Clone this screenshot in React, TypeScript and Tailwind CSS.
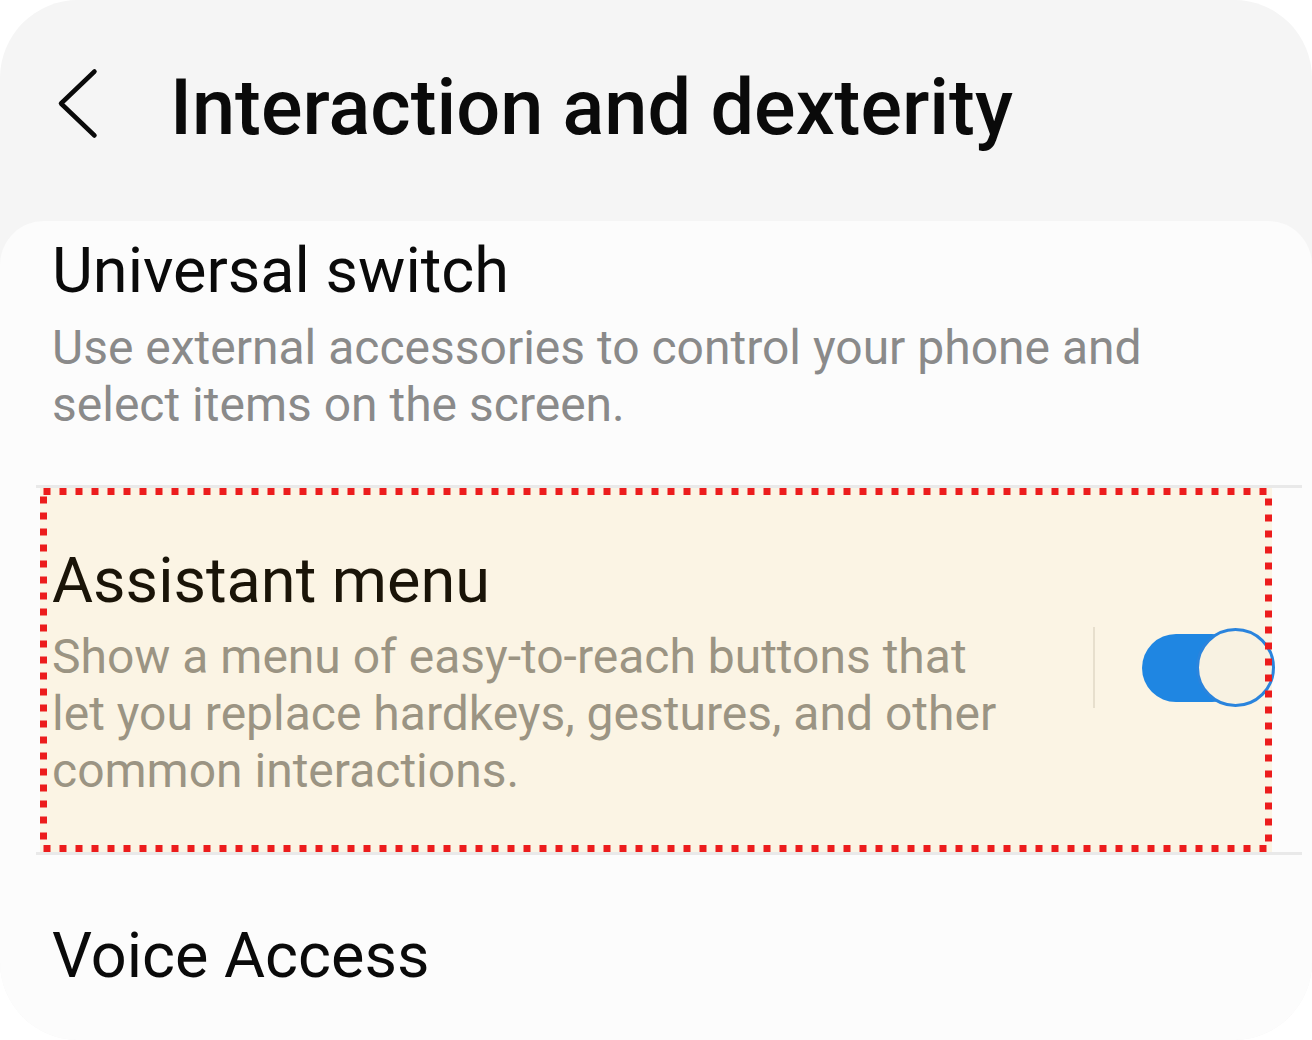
export default function App() {
  return (
    <div className="w-[1312px] h-[1040px] bg-white">
      <div className="h-full rounded-[78px] bg-[#f5f5f5] overflow-hidden flex flex-col font-['Roboto',sans-serif]">
        {/* header */}
        <header className="h-[221px] shrink-0 flex items-start pl-[56px] pt-[66px]">
          <svg className="w-[44px] h-[74px] shrink-0" viewBox="0 0 44 74" fill="none">
            <path d="M38.5 5.5 L5 37.5 L38.5 69.5" stroke="#0a0a0a" strokeWidth="4.5" strokeLinecap="round" strokeLinejoin="round" />
          </svg>
          <h1 className="ml-[70px] mt-[3px] text-[77.5px] leading-[78px] font-medium text-[#0a0a0a] whitespace-nowrap">
            Interaction and dexterity
          </h1>
        </header>

        {/* list card */}
        <div className="flex-1 rounded-t-[44px] bg-[#fcfcfc] flex flex-col">
          <div className="px-[52px] pt-[14px] pb-[52px]">
            <div className="text-[63px] leading-[72px] text-[#0a0a0a]">Universal switch</div>
            <div className="mt-[12px] text-[48px] leading-[57px] text-[#8a8a8a] whitespace-nowrap">
              Use external accessories to control your phone and
              <br />
              select items on the screen.
            </div>
          </div>

          <div className="h-[3px] bg-[#e9e9e9] ml-[36px] mr-[10px] shrink-0" />

          <div className="relative ml-[40px] w-[1232px] h-[364px] shrink-0 bg-[#fbf4e4] flex items-start">
            <div className="w-[1053px] shrink-0 pl-[12px] pt-[57px]">
              <div className="text-[63px] leading-[72px] text-[#1a1408]">Assistant menu</div>
              <div className="mt-[11px] text-[48px] leading-[57px] text-[#9b9483] whitespace-nowrap">
                Show a menu of easy-to-reach buttons that
                <br />
                let you replace hardkeys, gestures, and other
                <br />
                common interactions.
              </div>
            </div>
            <div className="mt-[139px] h-[81px] flex items-center shrink-0">
              <div className="w-[2px] h-[81px] bg-[#e7dfcd]" />
              <div className="relative ml-[47px] w-[133px] h-[79px]">
                <div className="absolute left-0 top-[6px] w-[104px] h-[68px] rounded-full bg-[#1f86e2]" />
                <div className="absolute right-0 top-0 w-[79px] h-[79px] rounded-full border-[3px] border-[#2a84dd] bg-[#f8f2e2]" />
              </div>
            </div>
            <svg className="absolute inset-0 w-full h-full pointer-events-none" fill="none">
              <rect x="3.5" y="3.5" width="1225" height="357" stroke="#ec1c1c" strokeWidth="7" strokeDasharray="7 9" />
            </svg>
          </div>

          <div className="h-[3px] bg-[#e9e9e9] ml-[36px] mr-[10px] shrink-0" />

          <div className="px-[52px] pt-[65px]">
            <div className="text-[63px] leading-[72px] text-[#0a0a0a]">Voice Access</div>
          </div>
        </div>
      </div>
    </div>
  )
}
